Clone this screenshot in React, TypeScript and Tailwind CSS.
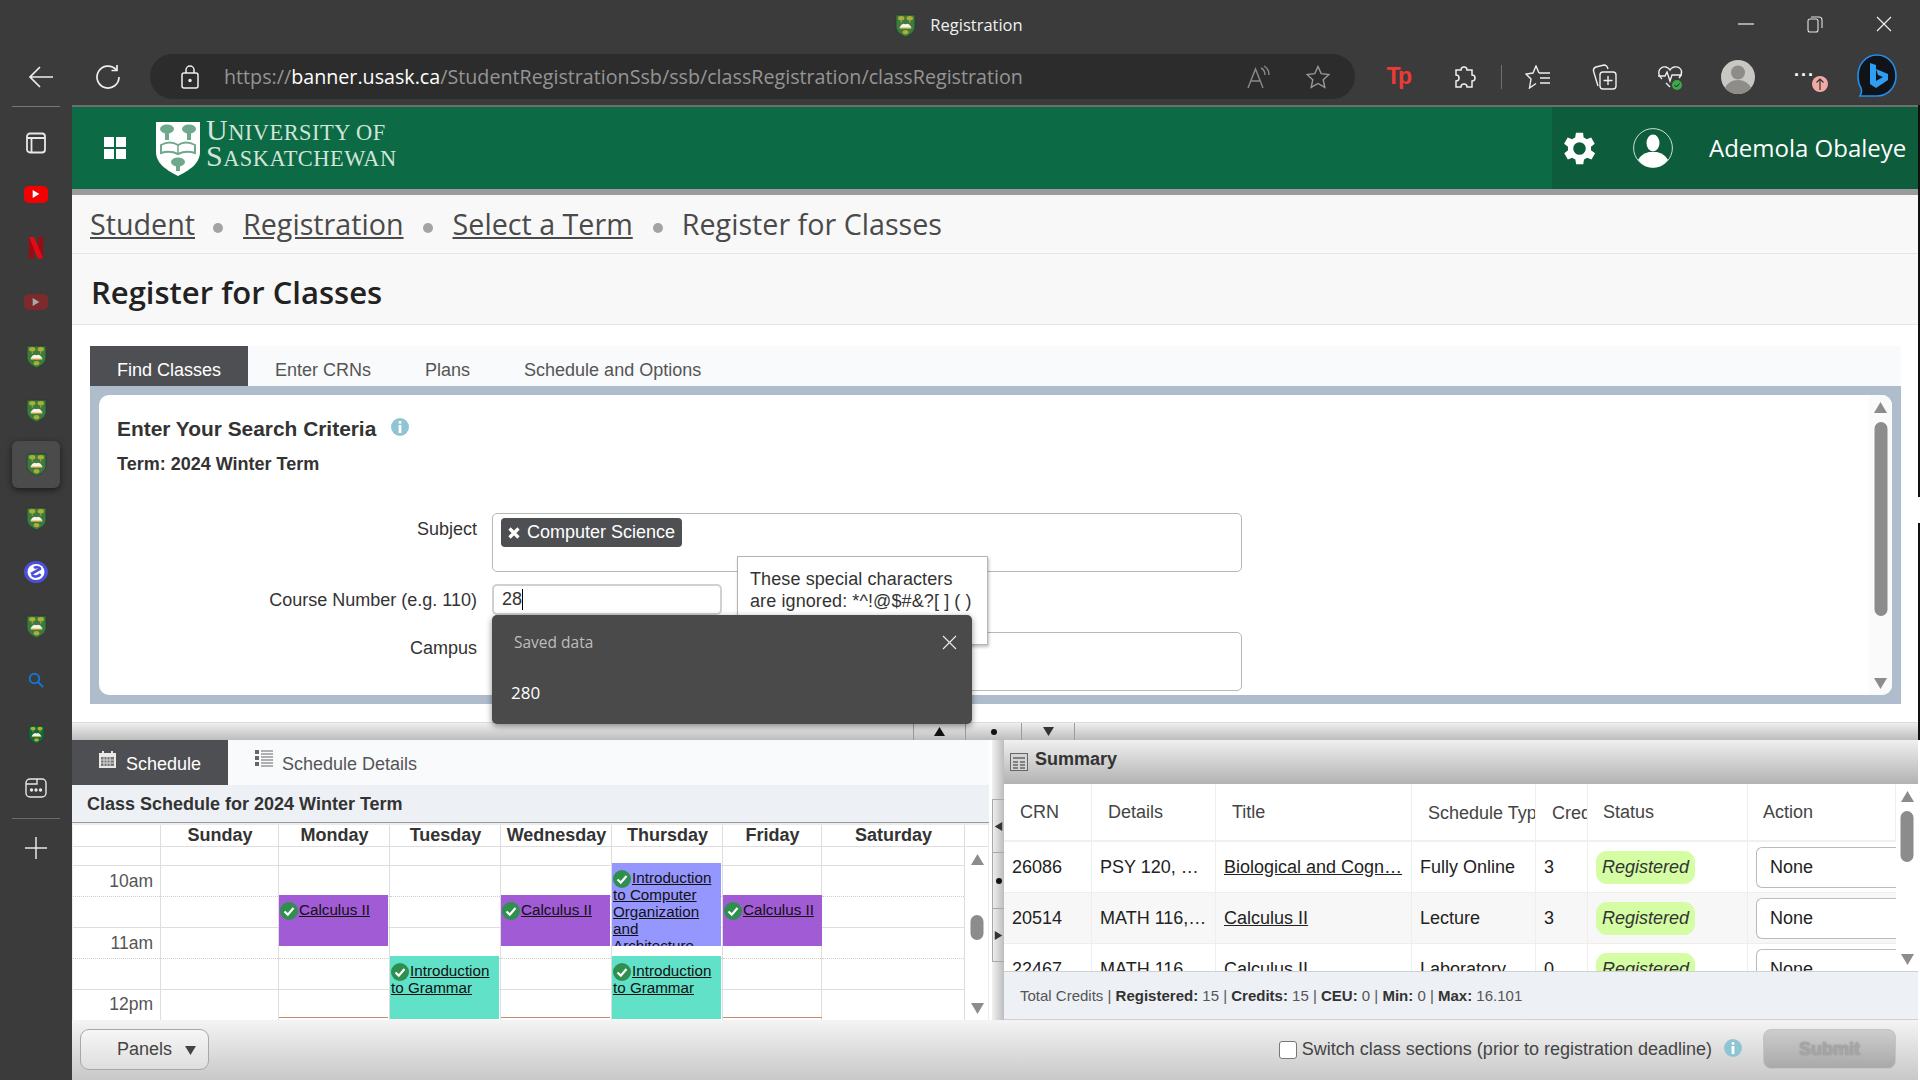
import React from "react";

const Shield = ({ w = 21, h = 23, dark = false }: { w?: number; h?: number; dark?: boolean }) => (
  <svg width={w} height={h} viewBox="0 0 22 24">
    <path d="M1 1H21V13C21 19 15 22 11 24C7 22 1 19 1 13Z" fill={dark ? "#0f6b3a" : "#3c7a40"} stroke="#22402a" strokeWidth="0.9" />
    <ellipse cx="6.5" cy="4.4" rx="3.3" ry="2.3" fill="#aeac34" />
    <ellipse cx="15.5" cy="4.4" rx="3.3" ry="2.3" fill="#aeac34" />
    <path d="M6 6.5H7V9H6ZM15 6.5H16V9H15Z" fill="#aeac34" />
    <path d="M5 13.5Q8 8.5 11 10.8Q14 8.5 17 13.5V14.8H5Z" fill="#f8f5e6" />
    <rect x="5" y="14.2" width="12" height="1.2" fill="#c9a33a" />
    <ellipse cx="11" cy="19" rx="3" ry="2.2" fill="#aeac34" />
  </svg>
);

const Tri = ({ dir, size = 12, color = "#8c8c8c" }: { dir: "up" | "down" | "left" | "right"; size?: number; color?: string }) => {
  const pts = { up: "6,1 12,11 0,11", down: "0,1 12,1 6,11", left: "11,0 11,12 1,6", right: "1,0 1,12 11,6" }[dir];
  return (
    <svg width={size} height={size} viewBox="0 0 12 12">
      <polygon points={pts} fill={color} />
    </svg>
  );
};

const Check = () => (
  <svg width="18" height="18" viewBox="0 0 18 18" className="inline-block align-middle -my-[3px]">
    <circle cx="9" cy="9" r="9" fill="#2f8f4f" />
    <path d="M4.5 9.5L7.8 12.6L13.5 6" fill="none" stroke="#fff" strokeWidth="2.2" />
  </svg>
);

const Info = ({ size = 18 }: { size?: number }) => (
  <svg width={size} height={size} viewBox="0 0 18 18">
    <circle cx="9" cy="9" r="9" fill="#8fc5d2" />
    <rect x="7.6" y="3" width="2.8" height="2.8" rx="1" fill="#fff" />
    <rect x="7.6" y="7" width="2.8" height="8" rx="0.6" fill="#fff" />
  </svg>
);

const Scrollbar = ({ thumbTop, thumbH, w, bg = "bg-white" }: { thumbTop: number; thumbH: number; w: string; bg?: string }) => (
  <div className={`${w} ${bg} shrink-0 relative h-full`}>
    <div className="absolute top-[6px] left-0 right-0 flex justify-center"><Tri dir="up" size={13} /></div>
    <div className="absolute left-1/2 -translate-x-1/2 w-[13px] rounded-full bg-[#8c8c8c]" style={{ top: thumbTop, height: thumbH }} />
    <div className="absolute bottom-[5px] left-0 right-0 flex justify-center"><Tri dir="down" size={13} /></div>
  </div>
);

const Event = ({ left, top, w, h, color, title }: { left: number; top: number; w: number; h: number; color: string; title: string }) => (
  <div
    className="absolute overflow-hidden text-[15.2px] leading-[17px] text-[#111] pl-[1px] pt-[6px]"
    style={{ left, top, width: w, height: h, backgroundColor: color }}
  >
    <Check />
    <span className="underline ml-[1px]">{title}</span>
  </div>
);

const sidebarIcons: React.ReactNode[] = [
  <svg key="a" width="22" height="22" viewBox="0 0 22 22" fill="none" stroke="#e8e8e8" strokeWidth="1.8"><rect x="2" y="1.5" width="18" height="19" rx="3" /><path d="M2 6H20M6.5 6V20.5" /></svg>,
  <div key="b" className="w-[24px] h-[17px] bg-[#f40000] rounded-[5px] flex items-center justify-center"><Tri dir="right" size={8} color="#fff" /></div>,
  <svg key="c" width="16" height="22" viewBox="0 0 16 22"><path d="M1 0H6V22L1 21Z" fill="#9c0a12" /><path d="M10 0H15V21L10 22Z" fill="#9c0a12" /><path d="M1 0H6L15 21L10 22Z" fill="#e50914" /></svg>,
  <div key="d" className="w-[24px] h-[16px] bg-[#7d2a2d] rounded-[5px] flex items-center justify-center"><Tri dir="right" size={8} color="#aaa" /></div>,
  <Shield key="e" />,
  <Shield key="f" />,
  <div key="g" className="w-[48px] h-[47px] rounded-[6px] bg-[#4b4b4b] shadow-[0_2px_6px_rgba(0,0,0,0.55)] flex items-center justify-center"><Shield /></div>,
  <Shield key="h" />,
  <svg key="i" width="24" height="22" viewBox="0 0 24 22"><ellipse cx="12" cy="11" rx="12" ry="11" fill="#4a50d8" /><ellipse cx="12" cy="11" rx="8.5" ry="8" fill="#fff" /><path d="M7 13L16 8C16 6 12 5.5 10 7M16.5 13C14.5 16 10 16.5 8 14" fill="none" stroke="#4a50d8" strokeWidth="2.6" /></svg>,
  <Shield key="j" />,
  <svg key="k" width="16" height="16" viewBox="0 0 16 16" fill="none" stroke="#1476d2" strokeWidth="2"><circle cx="6.5" cy="6.5" r="4.8" /><path d="M10 10L15 15" /></svg>,
  <Shield key="l" w={17} h={19} dark />,
  <svg key="m" width="22" height="22" viewBox="0 0 22 22" fill="none" stroke="#e8e8e8" strokeWidth="1.4"><rect x="1" y="2" width="20" height="18" rx="4" /><path d="M1 7H12V2" /><circle cx="6.5" cy="13" r="1" fill="#e8e8e8" /><circle cx="11" cy="13" r="1" fill="#e8e8e8" /><circle cx="15.5" cy="13" r="1" fill="#e8e8e8" /></svg>,
];

const gridCols = [
  { w: 88, head: "", time: true },
  { w: 118, head: "Sunday" },
  { w: 111, head: "Monday" },
  { w: 111, head: "Tuesday" },
  { w: 111, head: "Wednesday" },
  { w: 111, head: "Thursday" },
  { w: 99, head: "Friday" },
  { w: 143, head: "Saturday" },
];

const rowsH = [19, 31, 31, 31, 31, 29];
const rowStyle = ["border-b border-[#dedede]", "border-b border-dotted border-[#cfcfcf]", "border-b border-[#dedede]", "border-b border-dotted border-[#cfcfcf]", "border-b border-[#dedede]", ""];

const tableCols = [88, 124, 196, 124, 52, 160, 148];

const Cell = ({ i, children, pl }: { i: number; children: React.ReactNode; pl: number }) => (
  <div
    className="h-full flex items-center border-r border-[#eeeeee] overflow-hidden whitespace-nowrap shrink-0"
    style={{ width: tableCols[i], paddingLeft: pl }}
  >
    {children}
  </div>
);

const rows = [
  { crn: "26086", det: "PSY 120, …", title: "Biological and Cogn…", type: "Fully Online", cr: "3", bg: "bg-white" },
  { crn: "20514", det: "MATH 116,…", title: "Calculus II", type: "Lecture", cr: "3", bg: "bg-[#f7f7f7]" },
  { crn: "22467", det: "MATH 116,…", title: "Calculus II", type: "Laboratory", cr: "0", bg: "bg-white" },
];

export default function App() {
  return (
    <div className="relative w-[1920px] h-[1080px] overflow-hidden flex flex-col bg-[#3b3b3b] font-['Liberation_Sans',Arial,sans-serif] text-[18px] text-[#333]">
      {/* Browser chrome */}
      <div className="h-[54px] grid grid-cols-[1fr_auto_1fr] items-center font-['Open_Sans',sans-serif] shrink-0">
        <div />
        <div className="flex items-center gap-[14px] text-[16.5px] text-[#f0f0f0] pr-[2px] -mt-[3px]">
          <Shield w={21} h={23} />
          <span>Registration</span>
        </div>
        <div className="flex justify-end items-center pr-[28px] -mt-[6px]">
          <svg width="16" height="16" viewBox="0 0 16 16" className="mr-[53px]"><path d="M0 8H16" stroke="#eee" strokeWidth="1.2" /></svg>
          <svg width="16" height="17" viewBox="0 0 16 17" fill="none" stroke="#e4e4e4" strokeWidth="1.1" className="mr-[53px]"><rect x="1" y="3" width="10" height="13" rx="2" /><path d="M4 1H12Q15 1 15 4V12" /></svg>
          <svg width="16" height="16" viewBox="0 0 16 16"><path d="M1 1L15 15M15 1L1 15" stroke="#eee" strokeWidth="1.2" /></svg>
        </div>
      </div>
      <div className="h-[51px] flex items-start shrink-0">
        <div className="w-[82px] h-[45px] flex items-center justify-center">
          <svg width="26" height="24" viewBox="0 0 26 24" fill="none" stroke="#eee" strokeWidth="1.7"><path d="M25 12H2M12 2L2 12L12 22" /></svg>
        </div>
        <div className="w-[52px] h-[45px] flex items-center justify-center">
          <svg width="26" height="26" viewBox="0 0 26 26" fill="none" stroke="#eee" strokeWidth="1.7"><path d="M21 5.5A11 11 0 1 0 24 13M22 1V6.5H16.5" /></svg>
        </div>
        <div className="w-[16px]" />
        <div className="w-[1205px] h-[45px] rounded-full bg-[#2c2c2c] flex items-center pl-[31px] pr-[25px]">
          <svg width="18" height="24" viewBox="0 0 18 24" fill="none" stroke="#eee" strokeWidth="1.5"><rect x="1" y="8" width="16" height="15" rx="2" /><path d="M5 8V5A4 4 0 0 1 13 5V8" /><circle cx="9" cy="15.5" r="1" fill="#eee" /></svg>
          <div className="ml-[25px] flex-1 font-['Open_Sans',sans-serif] text-[19.7px] text-[#959595] whitespace-nowrap">
            https://<span className="text-white">banner.usask.ca</span>/StudentRegistrationSsb/ssb/classRegistration/classRegistration
          </div>
          <svg width="24" height="24" viewBox="0 0 24 24" fill="none" stroke="#8a8a8a" strokeWidth="1.4"><path d="M1 23L8.5 4L16 23M4 16H13" /><path d="M14 3Q18 5 18 10M17 1Q22 4 22 10" /></svg>
          <div className="w-[35px]" />
          <svg width="24" height="24" viewBox="0 0 24 24" fill="none" stroke="#999" strokeWidth="1.4"><path d="M12 1.5L15.2 8.6L23 9.5L17.2 14.7L18.8 22.4L12 18.5L5.2 22.4L6.8 14.7L1 9.5L8.8 8.6Z" /></svg>
        </div>
        <div className="w-[10px]" />
        <div className="w-[66px] h-[45px] flex items-center justify-center font-bold text-[#ee3a36] text-[23px] tracking-[-2.5px] font-['Liberation_Sans',sans-serif]">Tp</div>
        <div className="w-[66px] h-[45px] flex items-center justify-center">
          <svg width="24" height="24" viewBox="0 0 24 24" fill="none" stroke="#eee" strokeWidth="1.5"><path d="M9 5A3 3 0 0 1 15 5H20V10A3 3 0 0 1 20 16V22H15A3 3 0 0 0 9 22H4V16A3 3 0 0 0 4 10V5Z" /></svg>
        </div>
        <div className="w-[8px] h-[45px] flex items-center justify-center"><div className="w-[1px] h-[24px] bg-[#707070]" /></div>
        <div className="w-[66px] h-[45px] flex items-center justify-center">
          <svg width="26" height="24" viewBox="0 0 26 24" fill="none" stroke="#eee" strokeWidth="1.4"><path d="M14 8L11 1L8 8L1 9L6 14L4.5 23L11 18.5M14 8H25M15 13H25M15 18H25" /></svg>
        </div>
        <div className="w-[66px] h-[45px] flex items-center justify-center">
          <svg width="25" height="26" viewBox="0 0 25 26" fill="none" stroke="#eee" strokeWidth="1.4"><rect x="8" y="8" width="16" height="17" rx="3" /><path d="M16 12V21M11.5 16.5H20.5M6 22L1.5 7Q1 4 4 3L12 1Q15 1 16 5" /></svg>
        </div>
        <div className="w-[66px] h-[45px] flex items-center justify-center relative">
          <svg width="26" height="26" viewBox="0 0 26 26" fill="none" stroke="#eee" strokeWidth="1.4"><path d="M5 15Q1 11 2 7Q4 2 9 3Q12 4 13 6Q14 4 17 3Q23 2 24.5 7Q25 11 22 14M1 12H8L10 8L13 17L15 11H25M9 19L13 23" /><circle cx="20" cy="21" r="5" fill="#3ea84a" stroke="none" /><path d="M17.5 21L19.5 23L22.5 19.5" stroke="#123" strokeWidth="1" /></svg>
        </div>
        <div className="w-[2px]" />
        <div className="w-[66px] h-[45px] flex items-center justify-center">
          <svg width="34" height="34" viewBox="0 0 34 34"><circle cx="17" cy="17" r="17" fill="#c9c7c3" /><circle cx="17" cy="12.5" r="7" fill="#8e8c89" /><path d="M4 28Q8 20 17 20Q26 20 30 28Q25 34 17 34Q9 34 4 28Z" fill="#8e8c89" /></svg>
        </div>
        <div className="w-[4px]" />
        <div className="w-[66px] h-[45px] relative flex items-center justify-center">
          <span className="text-white font-bold text-[18px] tracking-[1px] -mt-[4px] -ml-[7px] leading-none">···</span>
          <div className="absolute left-[37px] top-[22px] w-[16px] h-[16px] rounded-full bg-[#f1aaa3] flex items-center justify-center">
            <svg width="10" height="12" viewBox="0 0 10 12" fill="none" stroke="#333" strokeWidth="1.2"><path d="M5 12V1M1.5 4.5L5 1L8.5 4.5" /></svg>
          </div>
        </div>
        <div className="w-[3px]" />
        <div className="w-[66px] h-[45px] flex items-center justify-center">
          <svg width="40" height="45" viewBox="0 0 40 45">
            <path d="M20 1C31 1 39 10 39 22C39 33 31 42 20 42H3C5 39 5 37 4 34C2 31 1 27 1 22C1 10 9 1 20 1Z" fill="#101418" stroke="#1f8ff0" strokeWidth="1.6" />
            <path d="M13 9L19 11V27L26 23L21 21L19 15L31 20V26L19 34L13 30Z" fill="#2f9df2" />
          </svg>
        </div>
      </div>

      {/* Body */}
      <div className="flex-1 flex min-h-0">
        {/* Sidebar */}
        <div className="w-[72px] shrink-0 flex flex-col items-center">
          <div className="w-[48px] h-[1px] bg-[#777] shrink-0 mt-[1px]" />
          <div className="h-[12px] shrink-0" />
          {sidebarIcons.map((ic, i) => (
            <div key={i} className={`${i === 0 ? "h-[48px]" : "h-[54px]"} flex items-center justify-center shrink-0`}>{ic}</div>
          ))}
          <div className="w-[48px] h-[1px] bg-[#6a6a6a] shrink-0 mt-[3px]" />
          <svg width="22" height="22" viewBox="0 0 22 22" className="mt-[18px]"><path d="M11 0V22M0 11H22" stroke="#e8e8e8" strokeWidth="1.5" /></svg>
        </div>

        {/* Page */}
        <div className="w-[1846px] shrink-0 flex flex-col border-t-2 border-[#6e6e6e] bg-white">
          <div className="h-[82px] shrink-0 bg-[#0c6b44] flex font-['Open_Sans',sans-serif]">
            <div className="w-[32px]" />
            <div className="grid grid-cols-2 gap-[2px] w-[22px] h-[22px] self-center">
              <div className="bg-white" /><div className="bg-white" /><div className="bg-white" /><div className="bg-white" />
            </div>
            <div className="w-[29px]" />
            <svg width="46" height="55" viewBox="0 0 46 55" className="self-center">
              <path d="M1 1H45V31C45 43 33 50 23 55C13 50 1 43 1 31Z" fill="#fff" />
              <g fill="#6fa98c"><ellipse cx="12" cy="8" rx="7" ry="4.5" /><rect x="10" y="11" width="4" height="8" /><ellipse cx="34" cy="8" rx="7" ry="4.5" /><rect x="32" y="11" width="4" height="8" /><ellipse cx="23" cy="41" rx="7" ry="4.5" /><rect x="21" y="44" width="4" height="6" /></g>
              <path d="M6 32V24Q15 19 23 24Q31 19 40 24V32Q31 29 23 33Q15 29 6 32Z" fill="none" stroke="#6fa98c" strokeWidth="2" />
              <path d="M23 24V33" stroke="#6fa98c" strokeWidth="1.5" />
            </svg>
            <div className="ml-[5px] self-center font-['Liberation_Serif',serif] text-[#d3e4da] leading-[23px] tracking-[0.5px] whitespace-nowrap text-[22.4px] -mt-[8px]">
              <div><span className="text-[30px]">U</span>NIVERSITY OF</div>
              <div><span className="text-[30px]">S</span>ASKATCHEWAN</div>
            </div>
            <div className="flex-1" />
            <div className="w-[366px] bg-[#0d5c3c] flex items-center text-white">
              <svg width="43" height="43" viewBox="0 0 24 24" className="ml-[6px]" fill="#fff"><path d="M19.4 13a7.5 7.5 0 0 0 0-2l2.1-1.6-2-3.5-2.5 1a7.5 7.5 0 0 0-1.7-1L15 3.2h-4L10.6 5.9a7.5 7.5 0 0 0-1.7 1l-2.5-1-2 3.5L6.6 11a7.5 7.5 0 0 0 0 2l-2.1 1.6 2 3.5 2.5-1a7.5 7.5 0 0 0 1.7 1l.4 2.7h4l.4-2.7a7.5 7.5 0 0 0 1.7-1l2.5 1 2-3.5ZM13 15.5a3.5 3.5 0 1 1 0-7 3.5 3.5 0 0 1 0 7Z" transform="translate(-1 0)" /></svg>
              <svg width="40" height="40" viewBox="0 0 40 40" className="ml-[32px]"><circle cx="20" cy="20" r="19.4" fill="none" stroke="#fff" strokeWidth="0.8" /><ellipse cx="20" cy="15" rx="6.5" ry="8.5" fill="#fff" /><path d="M5 32Q8 26 16 24H24Q32 26 35 32Q29 39.5 20 39.5Q11 39.5 5 32Z" fill="#fff" /></svg>
              <span className="ml-[36px] text-[24px] whitespace-nowrap">Ademola Obaleye</span>
            </div>
          </div>
          <div className="h-[6px] shrink-0 bg-[#9b9b9d]" />
          {/* Breadcrumb */}
          <div className="h-[59px] shrink-0 bg-[#f8f8f8] border-b border-[#e6e6e6] flex items-center pl-[18px] font-['Open_Sans',sans-serif] text-[28.7px] text-[#4a4a4a] whitespace-nowrap">
            <span className="underline">Student</span>
            <span className="w-[10px] h-[10px] rounded-full bg-[#a3a3a3] ml-[18px] mr-[20px] mt-[8px]" />
            <span className="underline">Registration</span>
            <span className="w-[10px] h-[10px] rounded-full bg-[#a3a3a3] ml-[19px] mr-[20px] mt-[8px]" />
            <span className="underline">Select a Term</span>
            <span className="w-[10px] h-[10px] rounded-full bg-[#a3a3a3] ml-[20px] mr-[19px] mt-[8px]" />
            <span>Register for Classes</span>
          </div>
          <div className="h-[71px] shrink-0 bg-[#f8f8f8] border-b border-[#e6e6e6] flex items-center pl-[19px] pt-[6px] font-['Open_Sans',sans-serif] font-semibold text-[31px] text-[#222] whitespace-nowrap">
            Register for Classes
          </div>
          {/* Find classes section */}
          <div className="h-[397px] shrink-0 pt-[21px] pl-[18px] pr-[17px] bg-white">
            <div className="h-[40px] bg-[#f8fafc] flex text-[18px] text-[#555]">
              <div className="w-[158px] bg-[#4e4f53] text-white flex items-center pl-[27px] pt-[8px]">Find Classes</div>
              <div className="ml-[27px] flex items-center pt-[8px]">Enter CRNs</div>
              <div className="ml-[54px] flex items-center pt-[8px]">Plans</div>
              <div className="ml-[54px] flex items-center pt-[8px]">Schedule and Options</div>
            </div>
            <div className="h-[318px] bg-[#aebccb] p-[9px]">
              <div className="h-full bg-white rounded-[10px] overflow-hidden flex">
                <div className="flex-1 pl-[18px] relative">
                  <div className="flex items-center h-[28px] mt-[20px] text-[20.9px] font-bold text-[#333]">
                    Enter Your Search Criteria
                    <span className="ml-[15px] -mt-[4px]"><Info /></span>
                  </div>
                  <div className="mt-[9px] text-[18px] leading-[24px] font-bold text-[#333]">Term: 2024 Winter Term</div>
                  <div className="mt-[37px] flex">
                    <div className="w-[360px] text-right pt-[4px] leading-[24px]">Subject</div>
                    <div className="ml-[15px] w-[750px] h-[59px] border border-[#b8b8b8] rounded-[5px] pl-[8px] pt-[4px]">
                      <div className="inline-flex items-center h-[29px] bg-[#4e4f53] rounded-[4px] text-white pl-[6px] pr-[7px] text-[18px]">
                        <svg width="14" height="14" viewBox="0 0 14 14" className="mr-[6px]"><path d="M2.5 2.5L11.5 11.5M11.5 2.5L2.5 11.5" stroke="#fff" strokeWidth="3.2" /></svg>
                        Computer Science
                      </div>
                    </div>
                  </div>
                  <div className="mt-[12px] flex items-center">
                    <div className="w-[360px] text-right leading-[24px]">Course Number (e.g. 110)</div>
                    <div className="ml-[15px] w-[230px] h-[31px] border-2 border-[#d0d0d0] rounded-[5px] pl-[8px] flex items-center text-[#333]">
                      28<div className="w-[1px] h-[21px] bg-black" />
                    </div>
                  </div>
                  <div className="mt-[17px] flex">
                    <div className="w-[360px] text-right pt-[4px] leading-[24px]">Campus</div>
                    <div className="ml-[15px] w-[750px] h-[59px] border border-[#b8b8b8] rounded-[5px]" />
                  </div>
                </div>
                <Scrollbar w="w-[23px]" bg="bg-[#fafafa]" thumbTop={27} thumbH={194} />
              </div>
            </div>
          </div>
          {/* Splitter */}
          <div className="h-[18px] shrink-0 bg-linear-to-b from-[#efefef] to-[#bdbdbd] border-t border-[#dcdcdc] flex pl-[841px]">
            <div className="w-[53px] h-full border-x border-[#9c9c9c] flex items-center justify-center"><Tri dir="up" size={11} color="#111" /></div>
            <div className="w-[55px] h-full flex items-center justify-center"><div className="w-[6px] h-[6px] rounded-full bg-[#111]" /></div>
            <div className="w-[54px] h-full border-x border-[#9c9c9c] flex items-center justify-center"><Tri dir="down" size={11} color="#333" /></div>
          </div>
          {/* Lower panels */}
          <div className="h-[280px] shrink-0 flex bg-white">
            <div className="w-[917px] shrink-0 flex flex-col">
              <div className="h-[45px] shrink-0 bg-[#f8fafc] flex text-[18px] text-[#555]">
                <div className="w-[156px] bg-[#4e4f53] text-white flex items-center pl-[27px] pt-[4px] gap-[10px]">
                  <svg width="17" height="18" viewBox="0 0 17 18" className="-mt-[12px]"><path d="M0 3H3V1H5V3H12V1H14V3H17V18H0Z" fill="#e8e8e8" /><g fill="#777"><rect x="2" y="7" width="13" height="9" /></g><path d="M5 7V16M8 7V16M11 7V16M2 10H15M2 13H15" stroke="#e8e8e8" strokeWidth="0.8" /></svg>
                  Schedule
                </div>
                <div className="flex items-center pl-[27px] pt-[4px] gap-[9px]">
                  <svg width="18" height="17" viewBox="0 0 18 17" className="-mt-[12px]" fill="#666"><rect x="0" y="0" width="4" height="4" /><rect x="0" y="6" width="4" height="4" /><rect x="0" y="12" width="4" height="4" /><path d="M6 1H18M6 4H18M6 7H18M6 10H18M6 13H18M6 16H18" stroke="#666" /></svg>
                  Schedule Details
                </div>
              </div>
              <div className="h-[38px] shrink-0 bg-[#edf0f5] border-b border-[#9a9a9a] flex items-center pl-[15px] pt-[2px] font-bold text-[18px] text-[#333]">
                Class Schedule for 2024 Winter Term
              </div>
              <div className="flex-1 min-h-0 pt-[2px] bg-[#ececec] flex pl-[1px]">
                <div className="flex bg-white relative h-full w-[915px]">
                  {gridCols.map((c, i) => (
                    <div key={i} className="shrink-0 border-r border-[#dedede] flex flex-col" style={{ width: c.w }}>
                      <div className="h-[22px] shrink-0 border-b border-[#dedede] flex items-center justify-center pl-[1px] pb-[2px] font-bold text-[18px] leading-none text-[#333]">{c.head}</div>
                      {rowsH.map((h, r) => (
                        <div key={r} className={`shrink-0 ${rowStyle[r]} flex items-center justify-end pr-[7px] text-[#555] text-[17.5px]`} style={{ height: h }}>
                          {c.time ? (r === 1 ? <span className="mt-[1px]">10am</span> : r === 3 ? "11am" : r === 5 ? "12pm" : "") : ""}
                        </div>
                      ))}
                    </div>
                  ))}
                  <div className="flex-1 flex flex-col pl-[1px]">
                    <div className="h-[22px] shrink-0 border-b border-[#dedede]" />
                    <div className="flex-1"><Scrollbar w="w-full" thumbTop={68} thumbH={25} /></div>
                  </div>
                  <Event left={206} top={70} w={109} h={51} color="#a05bd5" title="Calculus II" />
                  <Event left={428} top={70} w={109} h={51} color="#a05bd5" title="Calculus II" />
                  <Event left={650} top={70} w={99} h={51} color="#a05bd5" title="Calculus II" />
                  <Event left={539} top={38} w={109} h={83} color="#9696ff" title="Introduction to Computer Organization and Architecture" />
                  <Event left={317} top={131} w={109} h={63} color="#61e2c8" title="Introduction to Grammar" />
                  <Event left={539} top={131} w={109} h={63} color="#61e2c8" title="Introduction to Grammar" />
                  <div className="absolute left-[206px] top-[192px] w-[109px] h-[1px] bg-[#c98a6a]" />
                  <div className="absolute left-[428px] top-[192px] w-[109px] h-[1px] bg-[#c98a6a]" />
                  <div className="absolute left-[650px] top-[192px] w-[99px] h-[1px] bg-[#c98a6a]" />
                </div>
              </div>
            </div>
            {/* Vertical splitter */}
            <div className="w-[15px] shrink-0 pl-[3px] bg-white">
              <div className="h-full bg-linear-to-r from-[#f2f2f2] to-[#bdbdbd] flex flex-col">
                <div className="h-[59px] bg-linear-to-r from-[#f2f2f2] to-[#bdbdbd]" />
                <div className="h-[54px] border-y border-[#a8a8a8] border-l flex items-center justify-center"><Tri dir="left" size={9} color="#333" /></div>
                <div className="h-[55px] border-l border-[#a8a8a8] flex items-center justify-center"><div className="w-[6px] h-[6px] rounded-full bg-[#111]" /></div>
                <div className="h-[54px] border-y border-[#a8a8a8] border-l flex items-center justify-center"><Tri dir="right" size={9} color="#333" /></div>
              </div>
            </div>
            <div className="flex-1 flex flex-col min-w-0">
              <div className="h-[44px] shrink-0 bg-linear-to-b from-[#f0f0f0] to-[#b2b2b2] flex items-center pl-[6px] font-bold text-[#333]">
                <svg width="18" height="18" viewBox="0 0 18 18" fill="none" stroke="#666"><rect x="0.5" y="0.5" width="17" height="17" fill="#d4d4d4" /><path d="M3 5H15M3 9H8M10 9H15M3 12H8M10 12H15M3 15H8M10 15H15" strokeWidth="1.4" /></svg>
                <span className="ml-[7px] -mt-[5px]">Summary</span>
              </div>
              <div className="h-[187px] shrink-0 flex overflow-hidden">
                <div className="w-[892px] shrink-0 flex flex-col">
                  <div className="h-[58px] shrink-0 flex border-b-2 border-[#f0f0f0] text-[#444]">
                    <Cell i={0} pl={16}>CRN</Cell>
                    <Cell i={1} pl={16}>Details</Cell>
                    <Cell i={2} pl={16}>Title</Cell>
                    <Cell i={3} pl={16}><span className="mt-[2px]">Schedule Type</span></Cell>
                    <Cell i={4} pl={16}><span className="mt-[2px]">Credit Hours</span></Cell>
                    <Cell i={5} pl={15}>Status</Cell>
                    <Cell i={6} pl={15}>Action</Cell>
                  </div>
                  {rows.map((r, i) => (
                    <div key={i} className={`h-[51px] shrink-0 flex border-b border-[#eeeeee] text-[#222] ${r.bg}`}>
                      <Cell i={0} pl={8}>{r.crn}</Cell>
                      <Cell i={1} pl={8}>{r.det}</Cell>
                      <Cell i={2} pl={8}><span className="underline">{r.title}</span></Cell>
                      <Cell i={3} pl={8}>{r.type}</Cell>
                      <Cell i={4} pl={8}>{r.cr}</Cell>
                      <Cell i={5} pl={8}>
                        <span className="h-[33px] w-[99px] rounded-[11px] bg-[#d4fda4] flex items-center justify-center italic text-[#333]">Registered</span>
                      </Cell>
                      <div className="h-full pl-[8px] shrink-0 flex items-center" style={{ width: tableCols[6] }}>
                        <div className="h-[41px] flex-1 border border-r-0 border-[#bbbbbb] rounded-l-[6px] bg-white flex items-center pl-[13px]">None</div>
                      </div>
                    </div>
                  ))}
                </div>
                <Scrollbar w="w-[22px]" thumbTop={27} thumbH={51} />
              </div>
              <div className="h-[49px] shrink-0 bg-[#edf0f5] border-y border-[#d0d0d0] flex items-center pl-[16px] pt-[1px] text-[15px] text-[#555] whitespace-nowrap">
                <span>Total Credits | <b className="text-[#333]">Registered:</b> 15 | <b className="text-[#333]">Credits:</b> 15 | <b className="text-[#333]">CEU:</b> 0 | <b className="text-[#333]">Min:</b> 0 | <b className="text-[#333]">Max:</b> 16.101</span>
              </div>
            </div>
          </div>
          {/* Footer */}
          <div className="flex-1 min-h-0 bg-linear-to-b from-[#f4f4f4] to-[#c8c8c8] flex items-center pl-[8px] pr-[22px] pb-[1px] text-[#444]">
            <div className="w-[129px] h-[41px] border border-[#a8a8a8] rounded-[9px] bg-linear-to-b from-[#f6f6f6] to-[#dedede] flex items-center pl-[36px]">
              Panels
              <span className="ml-[13px] mt-[2px]"><Tri dir="down" size={11} color="#444" /></span>
            </div>
            <div className="flex-1" />
            <div className="w-[18px] h-[18px] rounded-[3px] border border-[#777] bg-white" />
            <span className="ml-[5px] whitespace-nowrap">Switch class sections (prior to registration deadline)</span>
            <span className="ml-[12px] -mt-[4px]"><Info /></span>
            <div className="ml-[21px] w-[133px] h-[40px] rounded-[8px] bg-linear-to-b from-[#cdcdcd] to-[#a9a9a9] border border-[#c4c4c4] flex items-center justify-center font-bold text-[#a5a5a5] [text-shadow:0_0_2px_#8a8a8a] -mt-[1px]">
              Submit
            </div>
          </div>
        </div>
        {/* Edge sliver */}
        <div className="w-[2px] shrink-0 flex flex-col bg-white">
          <div className="h-[392px] bg-[#111]" />
          <div className="h-[26px] bg-white" />
          <div className="h-[217px] bg-[#111]" />
        </div>
      </div>

      {/* Tooltip overlay */}
      <div className="absolute left-[737px] top-[556px] w-[251px] h-[89px] bg-white border border-[#b5b5b5] shadow-[1px_2px_3px_rgba(0,0,0,0.25)] pl-[12px] pt-[12px] text-[18px] leading-[21.5px] tracking-[0.1px] text-[#333] whitespace-nowrap">
        These special characters<br />are ignored: *^!@$#&amp;?[ ] ( )<br />! The % is allowed
      </div>
      {/* Saved-data popup */}
      <div className="absolute left-[492px] top-[615px] w-[480px] h-[109px] bg-[#4a4a4a] rounded-[5px] shadow-[0_2px_6px_rgba(0,0,0,0.45)] font-['Open_Sans',sans-serif]">
        <div className="flex items-center justify-between h-[55px] pl-[22px] pr-[15px] text-[15.5px] text-[#bdbdbd]">
          <span>Saved data</span>
          <svg width="15" height="15" viewBox="0 0 15 15"><path d="M1 1L14 14M14 1L1 14" stroke="#eee" strokeWidth="1.1" /></svg>
        </div>
        <div className="pl-[19px] pt-[11px] text-[17px] leading-[24px] text-white">280</div>
      </div>
    </div>
  );
}
